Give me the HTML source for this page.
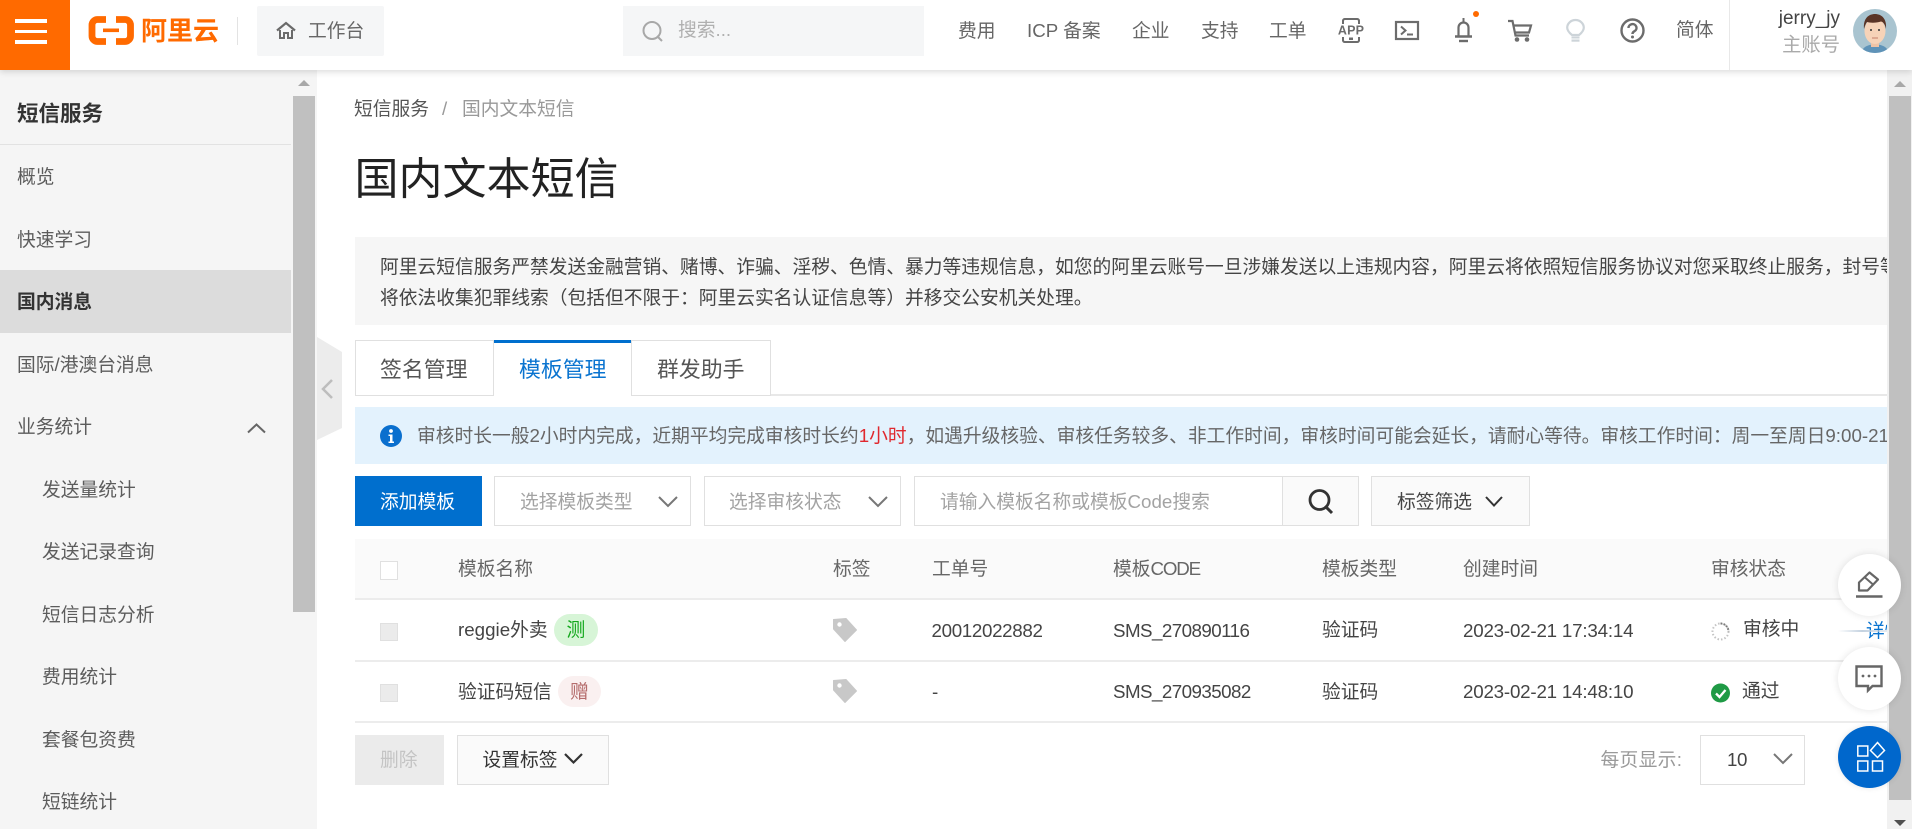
<!DOCTYPE html>
<html lang="zh-CN"><head><meta charset="utf-8"><title>国内文本短信</title>
<style>
*{box-sizing:border-box}
html,body{margin:0;padding:0;width:1912px;height:829px;overflow:hidden;background:#fff}
body{position:relative;font-family:"Liberation Sans","Noto Sans CJK SC",sans-serif;font-size:18.75px;color:#555}
.t{position:absolute;white-space:nowrap;line-height:30px;height:30px}
.b{position:absolute}
svg{position:absolute;overflow:visible}
.s{color:#5c5c5c}
.g{color:#a3a3a3}
.th{color:#666}
.td{color:#444}
.box{position:absolute;border:1.5px solid #e0e0e0}
</style></head><body>

<!-- sidebar -->
<div class="b" style="left:0;top:70px;width:317px;height:759px;background:#f5f5f5"></div>
<div class="b" style="left:293px;top:96px;width:22px;height:516px;background:#c0c0c0"></div>
<div class="b" style="left:298px;top:80px;width:0;height:0;border-left:6px solid transparent;border-right:6px solid transparent;border-bottom:6px solid #a8a8a8"></div>
<div class="t" style="left:17px;top:99px;font-size:21.5px;font-weight:bold;color:#333">短信服务</div>
<div class="b" style="left:0;top:144px;width:291px;height:1px;background:#e2e2e2"></div>
<div class="t s" style="left:17px;top:162px">概览</div>
<div class="t s" style="left:17px;top:225px">快速学习</div>
<div class="b" style="left:0;top:270px;width:291px;height:63px;background:#dcdcdc"></div>
<div class="t" style="left:17px;top:287px;font-weight:bold;color:#333">国内消息</div>
<div class="t s" style="left:17px;top:350px">国际/港澳台消息</div>
<div class="t s" style="left:17px;top:412px">业务统计</div>
<svg style="left:247px;top:423px" width="19" height="10"><path d="M1 9.5 9.500 1.500 18 9.500" fill="none" stroke="#666" stroke-width="2"/></svg>
<div class="t s" style="left:42px;top:475px">发送量统计</div>
<div class="t s" style="left:42px;top:537px">发送记录查询</div>
<div class="t s" style="left:42px;top:600px">短信日志分析</div>
<div class="t s" style="left:42px;top:662px">费用统计</div>
<div class="t s" style="left:42px;top:725px">套餐包资费</div>
<div class="t s" style="left:42px;top:787px">短链统计</div>
<svg style="left:317px;top:337px" width="25" height="103"><path d="M0 0 25 15V91L0 103Z" fill="#ececec"/><path d="M15 44 6 53 15 62" transform="translate(0,-1)" fill="none" stroke="#bdbdbd" stroke-width="2.500"/></svg>

<!-- breadcrumb + title -->
<div class="t" style="left:354px;top:94px;color:#555">短信服务</div>
<div class="t" style="left:442px;top:94px;color:#999">/</div>
<div class="t" style="left:462px;top:94px;color:#999">国内文本短信</div>
<div class="t" style="left:354.500px;top:150px;font-size:44px;line-height:60px;height:60px;color:#222">国内文本短信</div>

<!-- notice -->
<div class="b" style="left:355px;top:237px;width:1532px;height:88px;background:#f6f6f6;overflow:hidden">
<div class="t" style="left:25px;top:15px;color:#444">阿里云短信服务严禁发送金融营销、赌博、诈骗、淫秽、色情、暴力等违规信息，如您的阿里云账号一旦涉嫌发送以上违规内容，阿里云将依照短信服务协议对您采取终止服务，封号等处理</div>
<div class="t" style="left:25px;top:46px;color:#444">将依法收集犯罪线索（包括但不限于：阿里云实名认证信息等）并移交公安机关处理。</div>
</div>

<!-- tabs -->
<div class="b" style="left:771px;top:394px;width:1116px;height:2px;background:#e8e8e8"></div>
<div class="box" style="left:355px;top:340px;width:139px;height:56px;background:#fff"></div>
<div class="b" style="left:494px;top:340px;width:137px;height:56px;background:#fff;border-top:3px solid #006fce"></div>
<div class="box" style="left:631px;top:340px;width:140px;height:56px;background:#fff"></div>
<div class="t" style="left:380px;top:355px;font-size:21.875px;color:#555">签名管理</div>
<div class="t" style="left:519px;top:355px;font-size:21.875px;color:#0a74d0">模板管理</div>
<div class="t" style="left:657px;top:355px;font-size:21.875px;color:#555">群发助手</div>

<!-- info -->
<div class="b" style="left:355px;top:407px;width:1532px;height:57px;background:#e3f2fd;overflow:hidden">
<div class="t" style="left:62px;top:14px;color:#666">审核时长一般2小时内完成，近期平均完成审核时长约<span style="color:#e0282e">1小时</span>，如遇升级核验、审核任务较多、非工作时间，审核时间可能会延长，请耐心等待。审核工作时间：周一至周日9:00-21:00</div>
</div>
<svg style="left:380px;top:425px" width="22" height="22"><circle cx="11" cy="11" r="11" fill="#0a6fce"/><circle cx="11" cy="6" r="1.900" fill="#fff"/><path d="M8.500 9.500H12.500V16.500H14V18H8.500V16.500H10V11H8.500Z" fill="#fff"/></svg>

<!-- toolbar -->
<div class="b" style="left:355px;top:476px;width:127px;height:50px;background:#006fce"></div>
<div class="t" style="left:380px;top:487px;color:#fff">添加模板</div>
<div class="box" style="left:494px;top:476px;width:197px;height:50px"></div>
<div class="t g" style="left:520px;top:487px">选择模板类型</div>
<svg style="left:658px;top:496px" width="20" height="11"><path d="M1 1 10 10 19 1" fill="none" stroke="#777" stroke-width="2"/></svg>
<div class="box" style="left:704px;top:476px;width:197px;height:50px"></div>
<div class="t g" style="left:729px;top:487px">选择审核状态</div>
<svg style="left:868px;top:496px" width="20" height="11"><path d="M1 1 10 10 19 1" fill="none" stroke="#777" stroke-width="2"/></svg>
<div class="box" style="left:914px;top:476px;width:445px;height:50px"></div>
<div class="b" style="left:1282px;top:477px;width:76px;height:48px;background:#fafafa;border-left:1.500px solid #e0e0e0"></div>
<div class="t g" style="left:940px;top:487px">请输入模板名称或模板Code搜索</div>
<svg style="left:1308px;top:489px" width="26" height="26"><circle cx="11.500" cy="11" r="9.500" fill="none" stroke="#333" stroke-width="2.800"/><path d="M17 17 24 24" stroke="#333" stroke-width="3"/></svg>
<div class="box" style="left:1371px;top:476px;width:159px;height:50px;background:#fafafa"></div>
<div class="t td" style="left:1397px;top:487px">标签筛选</div>
<svg style="left:1485px;top:496px" width="18" height="11"><path d="M1 1 9 9.500 17 1" fill="none" stroke="#333" stroke-width="2"/></svg>

<!-- table -->
<div class="b" style="left:355px;top:539px;width:1532px;height:61px;background:#fafafa;border-bottom:2px solid #ececec"></div>
<div class="box" style="left:380px;top:561px;width:18px;height:19px;background:#fff"></div>
<div class="t th" style="left:458px;top:554px">模板名称</div>
<div class="t th" style="left:833px;top:554px">标签</div>
<div class="t th" style="left:932px;top:554px">工单号</div>
<div class="t th" style="left:1113px;top:554px">模板<span style="letter-spacing:-1.200px">CODE</span></div>
<div class="t th" style="left:1322px;top:554px">模板类型</div>
<div class="t th" style="left:1463px;top:554px">创建时间</div>
<div class="t th" style="left:1711px;top:554px">审核状态</div>

<!-- row 1 -->
<div class="b" style="left:355px;top:660px;width:1532px;height:1.500px;background:#ececec"></div>
<div class="box" style="left:380px;top:623px;width:18px;height:18px;background:#ebebeb"></div>
<div class="t td" style="left:458px;top:615px">reggie外卖</div>
<div class="b" style="left:554px;top:614px;width:44px;height:32px;border-radius:16px;background:#d7f5d7"></div>
<div class="t" style="left:566.500px;top:615px;color:#13a81c">测</div>
<svg style="left:833px;top:618px" width="24" height="24"><path d="M0.500 1.500 13 0.500 23.500 12 12 23.500 0.500 11Z" fill="#c8c8c8" stroke="#c8c8c8" stroke-linejoin="round"/><circle cx="6.500" cy="6.500" r="2.200" fill="#fff"/></svg>
<div class="t td" style="left:931.500px;top:616px;letter-spacing:-.33px">20012022882</div>
<div class="t td" style="left:1113px;top:616px;letter-spacing:-.55px">SMS_270890116</div>
<div class="t td" style="left:1322px;top:615px">验证码</div>
<div class="t td" style="left:1463px;top:616px;letter-spacing:-.2px">2023-02-21 17:34:14</div>
<svg style="left:1711px;top:622px" width="19" height="19"><circle cx="9.500" cy="9.500" r="8" fill="none" stroke="#c4c4c4" stroke-width="2" stroke-dasharray="1.500 2"/><path d="M9.500 1.500A8 8 0 0 1 17.500 9.500" fill="none" stroke="#777" stroke-width="2" stroke-dasharray="1.500 1.600"/></svg>
<div class="t td" style="left:1743px;top:614px">审核中</div>
<div class="t" style="left:1866px;top:616px;color:#0a74d0;width:21px;overflow:hidden">详情</div>
<div class="b" style="left:1838px;top:630px;width:60px;height:2px;background:linear-gradient(90deg,rgba(190,205,220,0),#c4d2e0 40%,rgba(190,205,220,.2))"></div>

<!-- row 2 -->
<div class="b" style="left:355px;top:721px;width:1532px;height:1.500px;background:#ececec"></div>
<div class="box" style="left:380px;top:684px;width:18px;height:18px;background:#ebebeb"></div>
<div class="t td" style="left:458px;top:677px">验证码短信</div>
<div class="b" style="left:558px;top:676px;width:43px;height:31px;border-radius:16px;background:#faf0f0"></div>
<div class="t" style="left:570px;top:677px;color:#b56c6c">赠</div>
<svg style="left:833px;top:679px" width="24" height="24"><path d="M0.500 1.500 13 0.500 23.500 12 12 23.500 0.500 11Z" fill="#c8c8c8" stroke="#c8c8c8" stroke-linejoin="round"/><circle cx="6.500" cy="6.500" r="2.200" fill="#fff"/></svg>
<div class="t td" style="left:932px;top:677px">-</div>
<div class="t td" style="left:1113px;top:677px;letter-spacing:-.55px">SMS_270935082</div>
<div class="t td" style="left:1322px;top:677px">验证码</div>
<div class="t td" style="left:1463px;top:677px;letter-spacing:-.2px">2023-02-21 14:48:10</div>
<svg style="left:1711px;top:683px" width="19" height="20"><circle cx="9.500" cy="10" r="9.500" fill="#1f9a45"/><path d="M5 10.500 8.500 14 14.500 7" fill="none" stroke="#fff" stroke-width="2.300"/></svg>
<div class="t td" style="left:1742px;top:676px">通过</div>

<!-- bottom bar -->
<div class="b" style="left:355px;top:735px;width:89px;height:50px;background:#ebebeb"></div>
<div class="t" style="left:380px;top:745px;color:#c4c4c4">删除</div>
<div class="box" style="left:457px;top:735px;width:152px;height:50px;background:#fafafa"></div>
<div class="t" style="left:482.500px;top:745px;color:#333">设置标签</div>
<svg style="left:564px;top:753px" width="19" height="11"><path d="M1 1 9.500 9.500 18 1" fill="none" stroke="#333" stroke-width="2.200"/></svg>
<div class="t" style="left:1600.500px;top:745px;color:#999;letter-spacing:.3px">每页显示:</div>
<div class="box" style="left:1700px;top:735px;width:105px;height:50px"></div>
<div class="t td" style="left:1727px;top:745px;letter-spacing:-.4px">10</div>
<svg style="left:1773px;top:753px" width="20" height="11"><path d="M1 1 10 10 19 1" fill="none" stroke="#777" stroke-width="2"/></svg>

<!-- right scrollbar -->
<div class="b" style="left:1887px;top:70px;width:25px;height:759px;background:#f1f1f1"></div>
<div class="b" style="left:1889px;top:96px;width:22px;height:704px;background:#c0c0c0"></div>
<div class="b" style="left:1894px;top:81px;width:0;height:0;border-left:6px solid transparent;border-right:6px solid transparent;border-bottom:6px solid #a8a8a8"></div>
<div class="b" style="left:1894px;top:820px;width:0;height:0;border-left:6px solid transparent;border-right:6px solid transparent;border-top:6px solid #505050"></div>

<!-- floating buttons -->
<div class="b" style="left:1838px;top:554px;width:63px;height:62px;border-radius:50%;background:#fff;box-shadow:0 0 8px rgba(0,0,0,.11)"></div>
<svg style="left:1855px;top:570px" width="28" height="29"><path d="M4 20.500V12.500L14.500 2.500 23 9.500 12.500 20.500Z" fill="none" stroke="#666" stroke-width="2.200" stroke-linejoin="round"/><path d="M10 7.500 18 14.500" stroke="#666" stroke-width="2"/><path d="M1 26.500H27.500" stroke="#666" stroke-width="2.400"/></svg>
<div class="b" style="left:1838px;top:647px;width:63px;height:63px;border-radius:50%;background:#fff;box-shadow:0 0 8px rgba(0,0,0,.11)"></div>
<svg style="left:1855px;top:665px" width="28" height="27"><path d="M1.500 1.500H26.500V21H17.500L13 25.500V21H1.500Z" fill="none" stroke="#666" stroke-width="2.400"/><circle cx="8" cy="11" r="1.400" fill="#666"/><circle cx="14" cy="11" r="1.400" fill="#666"/><circle cx="20" cy="11" r="1.400" fill="#666"/></svg>
<div class="b" style="left:1838px;top:726px;width:63px;height:62px;border-radius:50%;background:#0067cc;box-shadow:0 0 6px rgba(0,0,0,.1)"></div>
<svg style="left:1857px;top:742px" width="29" height="31"><rect x="0.800" y="4" width="10" height="10" fill="none" stroke="#fff" stroke-width="1.500"/><rect x="0.800" y="19" width="10" height="10" fill="none" stroke="#fff" stroke-width="1.500"/><rect x="15.500" y="19" width="10" height="10" fill="none" stroke="#fff" stroke-width="1.500"/><path d="M20.500 0.500 27.500 8.500 20.500 15.500 13.500 8.500Z" fill="none" stroke="#fff" stroke-width="1.500"/></svg>

<!-- header -->
<div class="b" style="left:0;top:0;width:1912px;height:70px;background:#fff;box-shadow:0 2px 6px rgba(0,0,0,.14)"></div>
<div class="b" style="left:0;top:0;width:70px;height:70px;background:#ff6a00"></div>
<div class="b" style="left:15px;top:19px;width:32px;height:3.500px;background:#fff"></div>
<div class="b" style="left:15px;top:29.500px;width:32px;height:3.500px;background:#fff"></div>
<div class="b" style="left:15px;top:40px;width:32px;height:3.500px;background:#fff"></div>
<svg style="left:88px;top:16px" width="47" height="29"><path d="M18 3.500H9.500A5.500 5.500 0 0 0 4 9V20A5.500 5.500 0 0 0 9.500 25.500H18" fill="none" stroke="#ff6a00" stroke-width="6.800"/><path d="M28 3.500H37A5.500 5.500 0 0 1 42.500 9V20A5.500 5.500 0 0 1 37 25.500H28" fill="none" stroke="#ff6a00" stroke-width="6.800"/><rect x="15" y="12.500" width="16" height="3.600" fill="#ff6a00"/></svg>
<div class="t" style="left:141px;top:16px;font-size:26px;font-weight:bold;color:#ff6a00">阿里云</div>
<div class="b" style="left:237px;top:17px;width:1px;height:28px;background:#e3e3e3"></div>
<div class="b" style="left:257px;top:6px;width:127px;height:50px;background:#f5f6f7;border-radius:2px"></div>
<svg style="left:276px;top:22px" width="20" height="17"><path d="M1 8.500 10 1 19 8.500" fill="none" stroke="#6a6a6a" stroke-width="2.200"/><path d="M4 8V16H8V11H12V16H16V8" fill="none" stroke="#6a6a6a" stroke-width="2"/></svg>
<div class="t" style="left:308px;top:16px;color:#666">工作台</div>
<div class="b" style="left:623px;top:6px;width:301px;height:50px;background:#f5f6f7"></div>
<svg style="left:642px;top:21px" width="21" height="21"><circle cx="10" cy="9.500" r="8.500" fill="none" stroke="#a8a8a8" stroke-width="2"/><path d="M15 15 20 20" stroke="#a8a8a8" stroke-width="2"/></svg>
<div class="t" style="left:678px;top:15px;color:#b0b0b0">搜索...</div>
<div class="t" style="left:958px;top:16px;color:#666">费用</div>
<div class="t" style="left:1027px;top:16px;color:#666">ICP 备案</div>
<div class="t" style="left:1132px;top:16px;color:#666">企业</div>
<div class="t" style="left:1201px;top:16px;color:#666">支持</div>
<div class="t" style="left:1269px;top:16px;color:#666">工单</div>
<svg style="left:1338px;top:18px" width="26" height="25"><path d="M5 6V2.500A2 2 0 0 1 7 1H19A2 2 0 0 1 21 2.500V6M5 19V22.500A2 2 0 0 0 7 24H19A2 2 0 0 0 21 22.500V19" fill="none" stroke="#6c6c6c" stroke-width="2"/><rect x="11" y="19.500" width="4" height="2.500" fill="#6c6c6c"/><text x="13" y="16.500" text-anchor="middle" font-family="Liberation Sans" font-weight="bold" font-size="12.500" letter-spacing=".2" fill="#6c6c6c">APP</text></svg>
<svg style="left:1395px;top:21px" width="24" height="19"><rect x="1" y="1" width="22" height="17" fill="none" stroke="#6c6c6c" stroke-width="2.200"/><path d="M6 5.500 10.500 9.500 6 13.500" fill="none" stroke="#6c6c6c" stroke-width="2"/><path d="M12 13.500H18" stroke="#6c6c6c" stroke-width="2"/></svg>
<svg style="left:1454px;top:18px" width="19" height="25"><path d="M9.500 0V4" stroke="#6c6c6c" stroke-width="2"/><path d="M4.500 18V9.500A5 5 0 0 1 14.500 9.500V18" fill="none" stroke="#6c6c6c" stroke-width="2.200"/><path d="M1 18.500H18" stroke="#6c6c6c" stroke-width="2.400"/><path d="M5 23H14" stroke="#6c6c6c" stroke-width="2.400"/></svg>
<div class="b" style="left:1473px;top:11px;width:6px;height:6px;border-radius:50%;background:#ff6a00"></div>
<svg style="left:1508px;top:20px" width="24" height="22"><path d="M0 1H4.500L7.500 15.500H21" fill="none" stroke="#6c6c6c" stroke-width="2.200"/><path d="M5.500 5.500H23L21 12.500H7" fill="none" stroke="#6c6c6c" stroke-width="2.200"/><circle cx="9" cy="19.500" r="2.300" fill="#6c6c6c"/><circle cx="19" cy="19.500" r="2.300" fill="#6c6c6c"/></svg>
<svg style="left:1566px;top:19px" width="19" height="23"><path d="M6 16C3 13.500 1.200 11.500 1.200 8.700A8.300 7.700 0 0 1 17.800 8.700C17.800 11.500 16 13.500 13 16Z" fill="none" stroke="#cdd4d9" stroke-width="2.200"/><rect x="5.500" y="17.500" width="8" height="2" fill="#cdd4d9"/><rect x="5.500" y="20.500" width="8" height="2.200" fill="#cdd4d9"/></svg>
<svg style="left:1620px;top:18px" width="25" height="25"><circle cx="12.500" cy="12.500" r="11" fill="none" stroke="#6c6c6c" stroke-width="2.400"/><path d="M8.500 10A4 3.800 0 1 1 14.500 13.200C13 14 12.500 14.600 12.500 16" fill="none" stroke="#6c6c6c" stroke-width="2.400"/><circle cx="12.500" cy="19" r="1.500" fill="#6c6c6c"/></svg>
<div class="t" style="left:1676px;top:15px;color:#666">简体</div>
<div class="b" style="left:1729px;top:0;width:1px;height:70px;background:#e8e8e8"></div>
<div class="t" style="right:72px;top:4px;font-size:19px;color:#444">jerry_jy</div>
<div class="t" style="right:72px;top:31px;font-size:19.300px;color:#aaa">主账号</div>
<svg style="left:1853px;top:9px" width="44" height="44"><defs><clipPath id="a"><circle cx="22" cy="22" r="22"/></clipPath></defs><g clip-path="url(#a)"><rect width="44" height="44" fill="#a9c4d0"/><path d="M8 44C10 37 16 35.500 22 35.500S34 37 36 44Z" fill="#5f93b8"/><rect x="18" y="29" width="8" height="9" fill="#efc3a6"/><ellipse cx="22" cy="22" rx="10.500" ry="13" fill="#f7d3b8"/><path d="M11 20C10 9 16 5 22 5S34 9 33 20C32 15 30 13 28 12.500 24 14 17 14 14 13 12.500 15 12 17 11 20Z" fill="#5a3426"/><circle cx="18" cy="21" r="1" fill="#333"/><circle cx="26" cy="21" r="1" fill="#333"/><path d="M19 29H25" stroke="#c47f6a" stroke-width="1"/></g></svg>

</body></html>
